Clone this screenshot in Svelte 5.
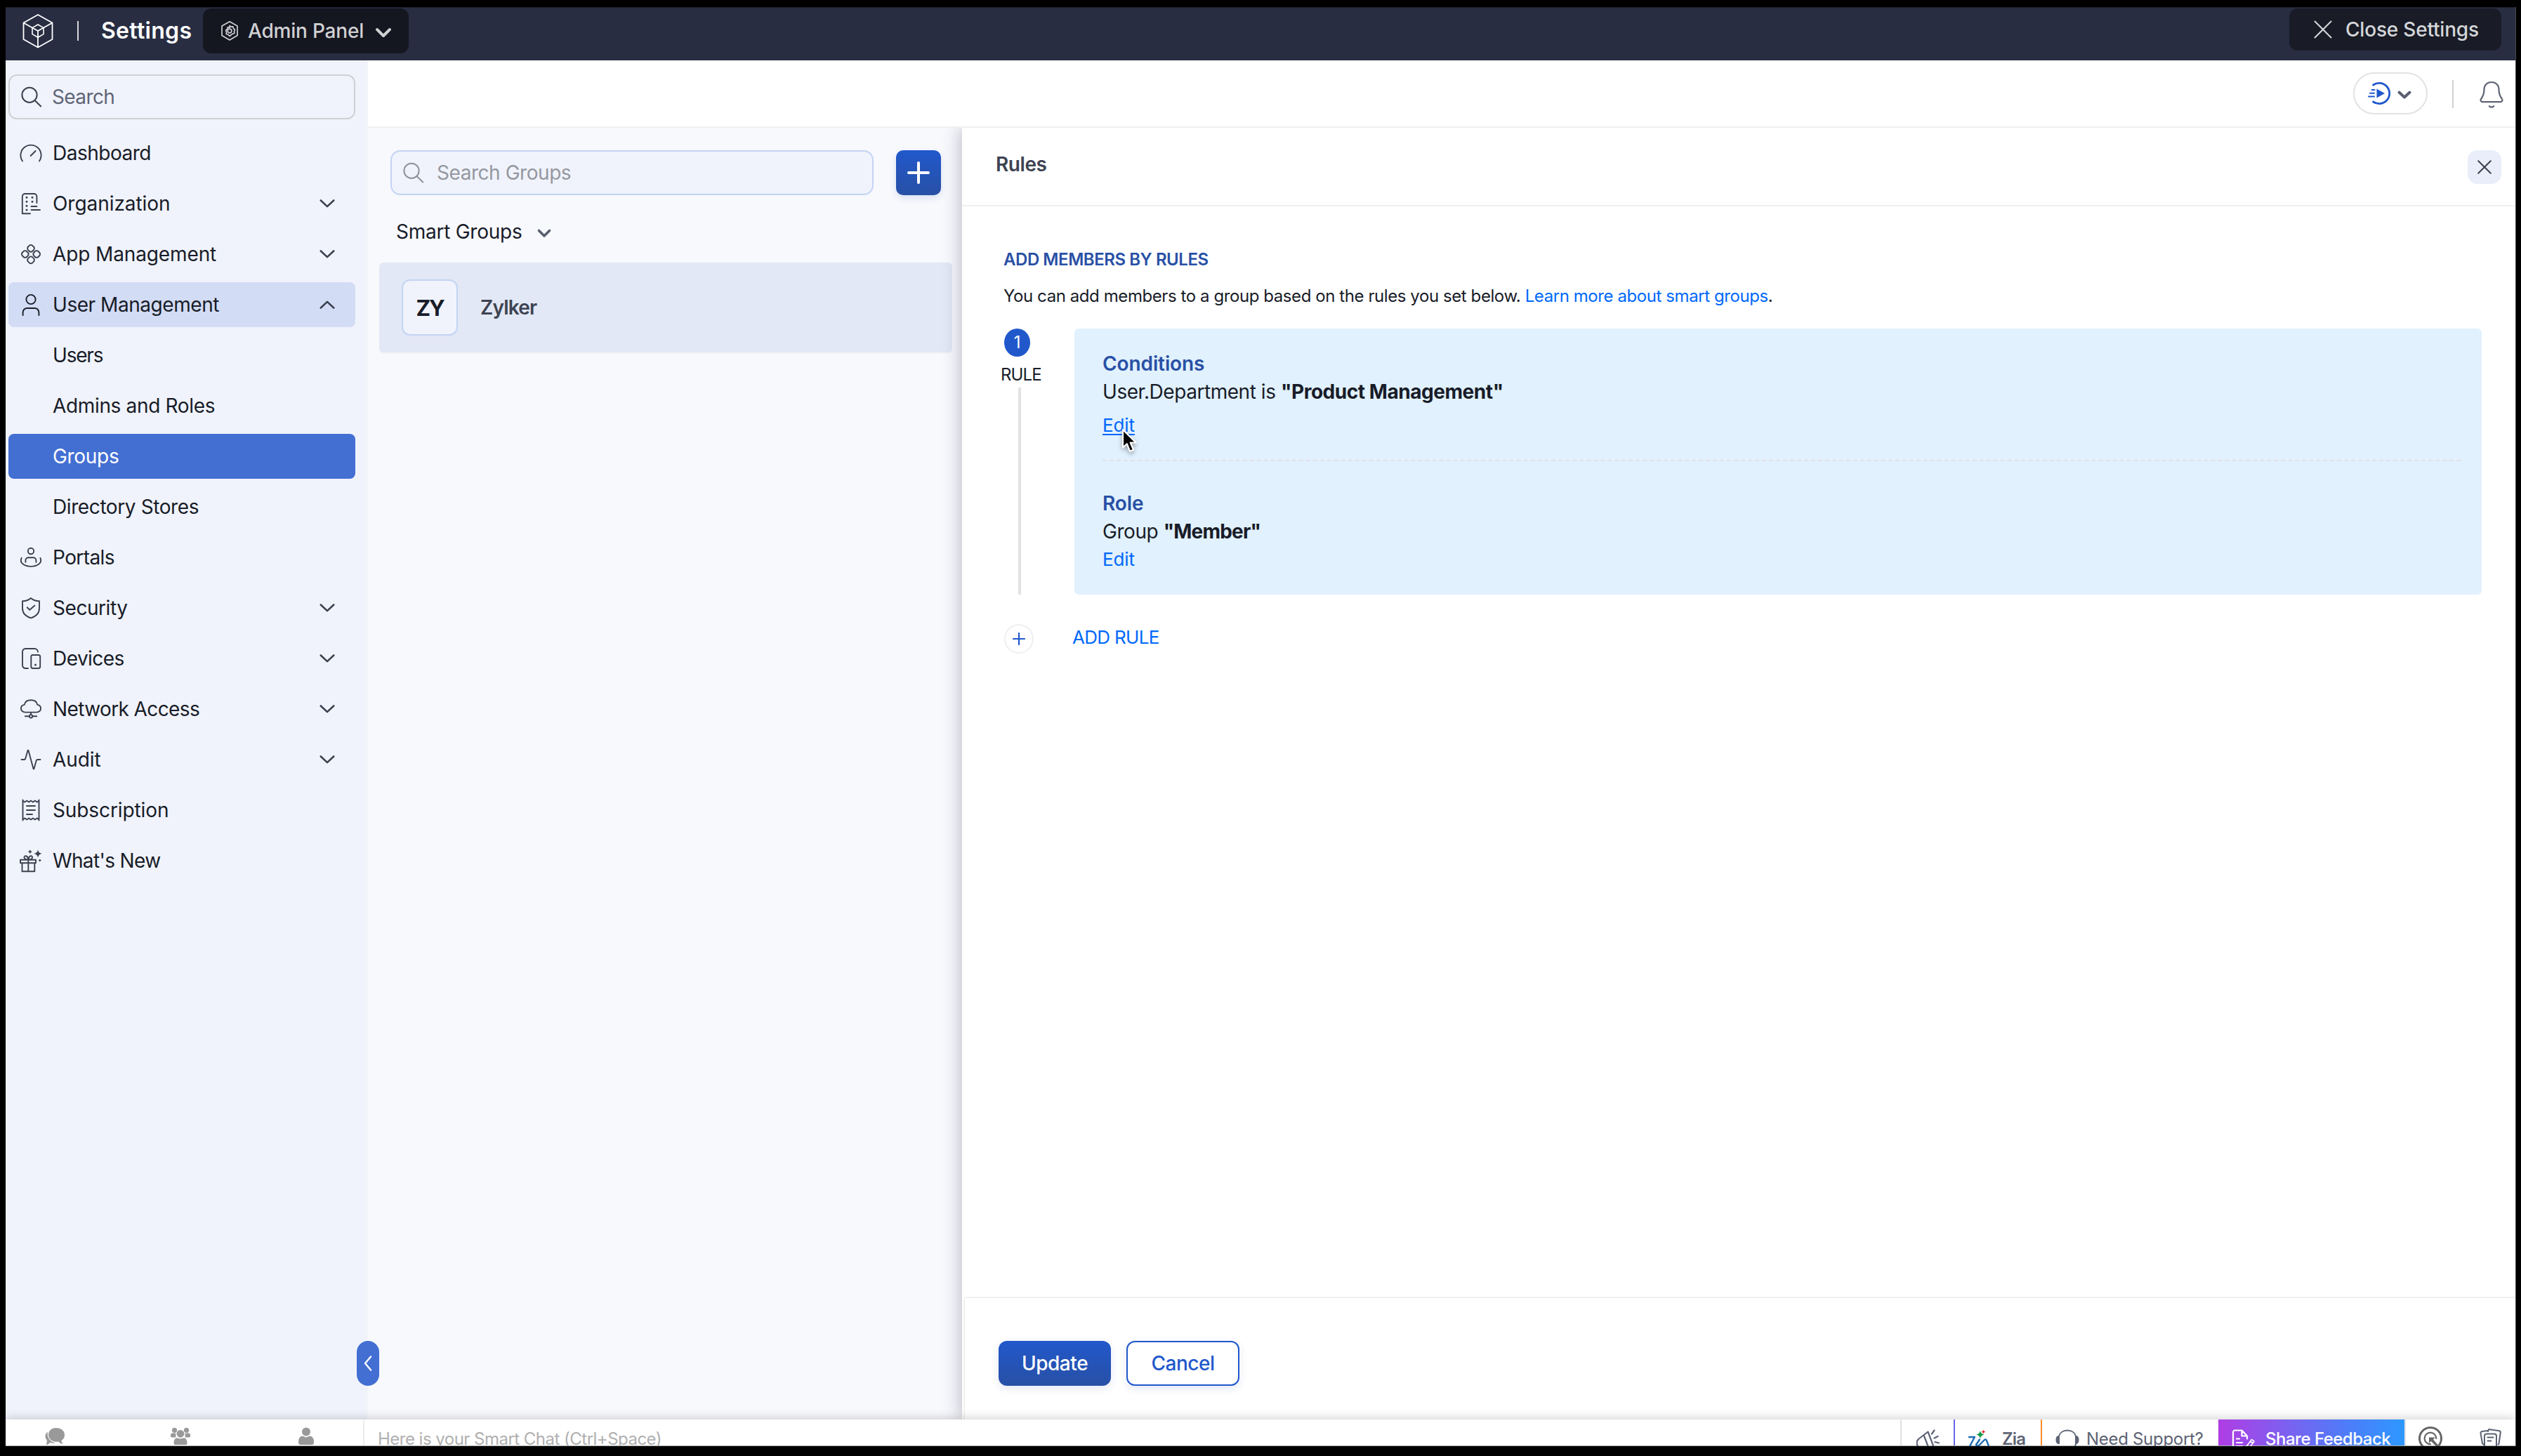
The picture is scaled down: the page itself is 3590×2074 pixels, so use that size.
<script>
  // tracking: per-label letter-spacing in px
  const nav = [
    { id: 'dashboard', label: 'Dashboard', tracking: -0.49 },
    { id: 'organization', label: 'Organization', expandable: true, tracking: -0.05 },
    { id: 'apps', label: 'App Management', expandable: true, tracking: -0.12 },
    { id: 'user', label: 'User Management', expandable: true, open: true, tracking: -0.45 },
    { label: 'Users', tracking: -1.2 },
    { label: 'Admins and Roles', tracking: -0.34 },
    { label: 'Groups', active: true, tracking: -0.3 },
    { label: 'Directory Stores', tracking: -0.4 },
    { id: 'portals', label: 'Portals', tracking: -0.6 },
    { id: 'security', label: 'Security', expandable: true, tracking: -0.45 },
    { id: 'devices', label: 'Devices', expandable: true, tracking: -0.55 },
    { id: 'network', label: 'Network Access', expandable: true, tracking: -0.6 },
    { id: 'audit', label: 'Audit', expandable: true, tracking: -0.1 },
    { id: 'subscription', label: 'Subscription', tracking: -0.1 },
    { id: 'new', label: "What's New", tracking: -0.65 }
  ];
</script>

{#snippet navIcon(id)}
  <svg class="nav-icon" viewBox="0 0 36 36">
    {#if id === 'dashboard'}
      <path d="M6 29.5A14.6 14.6 0 1 1 30 29.5M17.6 22L24.6 15" />
    {:else if id === 'organization'}
      <path d="M17 32.2H5.8V8a4 4 0 0 1 4-4h12.6a4 4 0 0 1 4 4v9M18.5 22h8M18.5 27H31" />
      <path class="dots" d="M12 9.3v.01M20 9.3v.01M12 15.3v.01M20 15.3v.01M12 21.3v.01M12 27v.01" />
    {:else if id === 'apps'}
      <g class="petals">
        <rect x="-4.4" y="-4.4" width="8.8" height="8.8" rx="3.2" transform="translate(18 9.8) rotate(45)" />
        <rect x="-4.4" y="-4.4" width="8.8" height="8.8" rx="3.2" transform="translate(18 26.4) rotate(45)" />
        <rect x="-4.4" y="-4.4" width="8.8" height="8.8" rx="3.2" transform="translate(9.8 18) rotate(45)" />
        <rect x="-4.4" y="-4.4" width="8.8" height="8.8" rx="3.2" transform="translate(26.2 18) rotate(45)" />
      </g>
    {:else if id === 'user'}
      <circle cx="18" cy="10.5" r="6.6" />
      <path d="M6.6 33v-4a6 6 0 0 1 6-6h10.8a6 6 0 0 1 6 6v4" />
    {:else if id === 'portals'}
      <circle cx="18" cy="9" r="4.2" />
      <path d="M10.4 24.7v-2.5a4 4 0 0 1 4-4h7a4 4 0 0 1 4 4v2.5M4.6 18.8C1 26 9.5 30.9 18 30.9S35 26 31.4 18.8" />
    {:else if id === 'security'}
      <path d="M18 4c-3.5 3-7.5 4.3-12 4.3v10.2C6 25 10.5 30 18 32.3 25.5 30 30 25 30 18.5V8.3C25.5 8.3 21.5 7 18 4z" />
      <path d="M12.7 17.3l3.6 3.4 7.1-6.2" />
    {:else if id === 'devices'}
      <path d="M14 32H10.2a4.2 4.2 0 0 1-4.2-4.2V8.2A4.2 4.2 0 0 1 10.2 4h13.2a4.5 4.5 0 0 1 4.5 4.5" />
      <rect x="18.3" y="13" width="12.9" height="19" rx="2.4" />
      <path class="dots" d="M24.5 27v.01" />
    {:else if id === 'network'}
      <path d="M10 22.600C6.500 22.600 3.900 20.200 3.900 17.200c0-2.800 2-4.800 4.800-5.300C9.500 7.800 13 5.200 18 5.200s8.500 2.600 9.300 6.700c2.800.5 4.800 2.500 4.800 5.300 0 3-2.600 5.400-6.100 5.400zM18 22.600V26M9.800 28.300h5.800M20.400 28.300h5.800" />
      <circle cx="18" cy="28.3" r="2.2" />
    {:else if id === 'audit'}
      <path d="M4.5 18H8.500c1 0 1.500-.6 1.700-1.500L13.700 4.600h.6L21.700 31.400h.6L25.700 19.500c.3-.9.800-1.500 1.800-1.500H31.500" />
    {:else if id === 'subscription'}
      <path d="M6.500 3.500v29M29.500 3.500v29M6.500 4.500l2.900 2 2.900-2 2.900 2 2.800-2 2.900 2 2.900-2 2.900 2 2.800-2M6.500 31.500l2.900-2 2.900 2 2.900-2 2.800 2 2.900-2 2.900 2 2.900-2 2.800 2M12 12h12M12 18h12M12 24h8" />
    {:else}
      <path d="M3 16.800h22v4.500H3zM5.500 21.300h17.800v12H5.500zM14.300 16.500v17M14.300 16.500c-5 0-6.300-1.800-5.700-4 .8-2.300 4.800-1.800 5.700 4 .9-5.800 4.900-6.300 5.700-4 .6 2.200-.7 4-5.700 4" />
      <path class="sparkle" d="M28 2.500q.9 4.600 5.500 5.500-4.600.9-5.500 5.500-.9-4.600-5.500-5.500 4.600-.9 5.500-5.500zM16.800 2.300q.5 2.500 3 3-2.500.5-3 3-.5-2.500-3-3 2.500-.5 3-3zM30.800 15.200q.4 2 2.400 2.400-2 .4-2.400 2.400-.4-2-2.400-2.400 2-.4 2.400-2.400z" />
    {/if}
  </svg>
{/snippet}

{#snippet magnifier()}
  <svg class="magnifier" viewBox="0 0 30 30">
    <circle cx="12" cy="12.3" r="10.6" />
    <path d="M19.5 20l8.700 8.500" />
  </svg>
{/snippet}

<div class="screen">
  <div class="window">
    <header class="header">
      <svg class="logo" viewBox="0 0 44 50">
        <path d="M22 2L42.500 13.500V37L22 48.500 1.500 37V13.500zM1.500 13.500L22 25 42.500 13.500M22 25V48.500" />
        <path class="inner" d="M22 16l8 4.600v9L22 34.200l-8-4.600v-9z" />
      </svg>
      <span class="header-rule"></span>
      <span class="title">Settings</span>
      <button class="panel-switch">
        <svg class="hex" viewBox="0 0 26 30">
          <path d="M13 1.800L24 8v13.500L13 28 2 21.500V8z" />
          <path d="M13 7.500l2 1.700 2.700-.3.800 2.600 2 1.800-1 2.400.3 2.700-2.600.8L13 22.500l-2.200-2.300-2.600-.8.300-2.700-1-2.400 2-1.800.8-2.600 2.700.3z" />
          <circle cx="13" cy="15" r="2.8" />
        </svg>
        <span>Admin Panel</span>
        <svg class="switch-caret" viewBox="0 0 24 16"><path d="M3 3l9 9 9-9" /></svg>
      </button>
      <button class="close-settings">
        <svg viewBox="0 0 26 26"><path d="M1.500 1.500l23 23M24.500 1.500l-23 23" /></svg>
        <span>Close Settings</span>
      </button>
    </header>

    <div class="body">
      <aside class="sidebar">
        <div class="side-search">
          {@render magnifier()}
          <span>Search</span>
        </div>
        <nav>
          {#each nav as item}
            <div class="row" class:open={item.open} class:active={item.active}>
              <span class="slot">
                {#if item.id}{@render navIcon(item.id)}{/if}
              </span>
              <span class="label" style:letter-spacing="{item.tracking}px">{item.label}</span>
              {#if item.expandable}
                <svg class="chev" viewBox="0 0 22 12"><path d="M1.800 1.500l9.200 8.600 9.200-8.600" /></svg>
              {/if}
            </div>
          {/each}
        </nav>
        <button class="collapse" aria-label="Collapse">
          <svg viewBox="0 0 12 22"><path d="M10 1.500L2 11l8 9.500" /></svg>
        </button>
      </aside>

      <main class="main">
        <div class="topbar">
          <div class="play">
            <svg class="play-icon" viewBox="0 0 34 34">
              <path class="ring" d="M7.500 5A14.700 14.700 0 1 1 7.500 29" />
              <path class="lines" d="M5.500 12h4M3 16.800h6M1 21.500h8" />
              <path class="tri" d="M12.500 10.500v13L24 17z" />
            </svg>
            <svg class="play-caret" viewBox="0 0 20 13"><path d="M2.500 2.500L10 9.500l7.500-7" /></svg>
          </div>
          <span class="top-rule"></span>
          <svg class="bell" viewBox="0 0 34 40">
            <path d="M17 2C10.500 2 6.500 6.500 6.500 12.500 6.500 20 4.500 22.500 2.300 25.500c-1.600 2.400-.4 4.700 2 4.700h25.400c2.400 0 3.600-2.300 2-4.700C29.500 22.500 27.500 20 27.500 12.500 27.500 6.500 23.500 2 17 2zM13.800 36.200q3.200 3 6.400 0" />
          </svg>
        </div>

        <div class="content">
          <section class="groups">
            <div class="group-tools">
              <div class="group-search">
                {@render magnifier()}
                <span>Search Groups</span>
              </div>
              <button class="add" aria-label="Add group">
                <svg viewBox="0 0 32 32"><path d="M16 2v28M2 16h28" /></svg>
              </button>
            </div>
            <div class="filter">
              <span>Smart Groups</span>
              <svg viewBox="0 0 20 13"><path d="M2.500 2.500L10 10l7.500-7.500" /></svg>
            </div>
            <div class="group">
              <span class="avatar">ZY</span>
              <span class="group-name">Zylker</span>
            </div>
          </section>

          <section class="rules">
            <div class="rules-head">
              <h2>Rules</h2>
              <button class="dismiss" aria-label="Close">
                <svg viewBox="0 0 20 20"><path d="M1.200 1.200l17.600 17.600M18.800 1.200L1.200 18.800" /></svg>
              </button>
            </div>
            <div class="rules-body">
              <h3>ADD MEMBERS BY RULES</h3>
              <p class="intro">You can add members to a group based on the rules you set below. <a href="#learn">Learn more about smart groups</a>.</p>
              <div class="rule">
                <div class="step">
                  <span class="num">1</span>
                  <span class="step-label">RULE</span>
                  <span class="step-line"></span>
                </div>
                <div class="card">
                  <div class="block first">
                    <h4>Conditions</h4>
                    <p>User.Department is <b>"Product Management"</b></p>
                    <div class="edit-line">
                      <a class="hovered" href="#conditions">Edit</a>
                      <svg class="cursor" viewBox="0 0 24 36">
                        <path d="M2 2v25.500l5.800-5.300 4.300 10.600 5-2.100-4.400-10.200h8z" />
                      </svg>
                    </div>
                  </div>
                  <div class="block">
                    <h4>Role</h4>
                    <p>Group <b class="member">"Member"</b></p>
                    <div class="edit-line"><a href="#role">Edit</a></div>
                  </div>
                </div>
              </div>
              <div class="add-rule">
                <span class="add-circle">
                  <svg viewBox="0 0 18 18"><path d="M9 1v16M1 9h16" /></svg>
                </span>
                <a href="#add">ADD RULE</a>
              </div>
            </div>
            <div class="actions">
              <button class="btn primary">Update</button>
              <button class="btn secondary">Cancel</button>
            </div>
          </section>
        </div>
      </main>
    </div>

    <footer class="chatbar">
      <div class="tabs">
        <svg viewBox="0 0 30 26">
          <path d="M17 1c7 0 12 4 12 9.800 0 3.800-1.700 6.500-4.500 8.200.2 2 1 3.300 2.500 4.500-3 .2-5.200-1-6.500-3-8.500 1.500-14.500-3.500-14.500-9.700C6 5 10.500 1 17 1z" />
          <path d="M5 6.500C1.500 9 .6 13 2.500 16.500c.9 1.700 1.700 3 1.200 4.900L2.800 25c2.700-.2 4.200-1.400 5.200-3 2.500.6 5 .6 7.500-.1C8 21 3.500 14 5 6.500z" />
        </svg>
        <svg viewBox="0 0 30 26">
          <circle cx="6.500" cy="4.300" r="3.600" /><circle cx="23.500" cy="4.300" r="3.600" />
          <path d="M1 13.500V11c0-2 2-3 4-2.600l3.500.4-.2 5.700H2.500zM29 13.500V11c0-2-2-3-4-2.600l-3.500.4.200 5.700h5.800z" />
          <circle cx="15" cy="9.300" r="5.400" />
          <path d="M5.500 22.500c0-4 1.500-7 4.500-7.300l5 1.300 5-1.300c3 .3 4.500 3.300 4.500 7.300 0 2-1 2.500-2 2.500H7.500c-1 0-2-.5-2-2.500z" />
        </svg>
        <svg viewBox="0 0 30 26">
          <circle cx="15" cy="6.500" r="6" />
          <path d="M4 21c0-5 2-8.300 6-8.500l5 2 5-2c4 .2 6 3.500 6 8.500 0 3-1.200 4-3 4H7c-1.800 0-3-1-3-4z" />
        </svg>
      </div>
      <div class="chat-input">Here is your Smart Chat (Ctrl+Space)</div>
      <div class="horn">
        <svg viewBox="0 0 34 34">
          <path d="M1.500 23q-2.500-5.500 2-9.500L16.500 3.500l8 21-16 2.500q-5 0-7-4zM11 9.500l6.500 17M22 6.500l3.500-5M25.500 12.500l5-2.500M26.500 18l5.500 1.500" />
        </svg>
      </div>
      <div class="zia">
        <svg viewBox="0 0 30 34">
          <path class="zig" d="M1 11h8L2 24M16 14.500l-5 7.500q1.500 2.500 4 1L22.500 15.500q2.500-2.500 3.500.5l3.500 9" />
          <path class="green" d="M17 2q1 4.500 5.500 5.500-4.500 1-5.500 5.500-1-4.500-5.500-5.500 4.500-1 5.500-5.500z" />
          <path class="red" d="M21.500.8q.5 2.200 2.700 2.700-2.200.5-2.700 2.700-.5-2.200-2.700-2.700 2.200-.5 2.700-2.700z" />
        </svg>
        <span>Zia</span>
      </div>
      <div class="support">
        <svg viewBox="0 0 34 34">
          <path class="fill" d="M6 9v12H4q-3.500-1-3.500-6T4 9zM28 9v12h2q3.500-1 3.500-6T30 9z" />
          <path d="M5 10C6 5 10.500 1.500 17 1.500S28 5 29 10M29 21q-1 4-4 6" />
        </svg>
        <span>Need Support?</span>
      </div>
      <div class="feedback">
        <svg viewBox="0 0 34 34">
          <path d="M2 28V4a2.500 2.500 0 0 1 2.500-2.500H14.500L22 9.500v4M14.500 1.500v8H22M7 13.500h4M7 19h8M7 24h8" />
          <path class="pencil" d="M20.500 25L28.500 14.500l3.500 2.700L24 28M26.500 17l3.500 2.700" />
        </svg>
        <span>Share Feedback</span>
      </div>
      <div class="tail">
        <svg class="quick" viewBox="0 0 36 36">
          <circle class="outer" cx="18" cy="18" r="15.500" />
          <path d="M18 26.200A8.300 8.300 0 1 1 26.200 18" />
          <path class="arrow" d="M16 16.500h8.500L22 19.500l8 9-2.500 2L19 22l-3 2.500z" />
        </svg>
        <svg class="notes" viewBox="0 0 32 32">
          <rect x="7" y="8.500" width="17" height="20" rx="3" />
          <path d="M5.500 23.500L4 22 1.500 7.500Q1.500 5.500 3.500 5l7.500-1M12 5l1-3 14.500 2Q30 4.500 29.800 6.500L27.500 22.500l-1 1M11.500 13.500h8M11.500 18.500h5" />
        </svg>
      </div>
    </footer>
  </div>
</div>

<style>
  :global(body) { background: #000; }
  * { box-sizing: border-box; }
  h2, h3, h4, p { margin: 0; }
  button { font: inherit; letter-spacing: inherit; border: 0; padding: 0; }
  svg { display: block; flex: none; fill: none; stroke-linecap: round; stroke-linejoin: round; }
  a { color: #0068fb; text-decoration: none; }

  .screen {
    width: 3590px;
    height: 2074px;
    padding: 10px 7px 14px 8px;
    background: #000;
    font-family: Inter, "Liberation Sans", sans-serif;
    font-size: 28px;
    letter-spacing: -0.45px;
    color: #181c28;
  }
  .window {
    position: relative;
    height: 2050px;
    display: flex;
    flex-direction: column;
    overflow: hidden;
    border-right: 1px solid #4a4a4a;
    background: #fff;
  }

  /* header */
  .header {
    flex: none;
    height: 76px;
    display: flex;
    align-items: flex-start;
    background: #282d42;
    border-top: 1px solid #1a1d2b;
    padding: 1px 20px 0 24px;
  }
  .logo { width: 44px; height: 50px; margin-top: 7px; stroke: #fff; stroke-width: 1.8; }
  .logo .inner { stroke-width: 1.6; }
  .header-rule { width: 2px; height: 28px; margin: 18px 0 0 34px; background: #d8d8dc; }
  .title {
    width: 145px;
    margin-left: 32px;
    font-size: 32px;
    font-weight: 600;
    letter-spacing: 0.3px;
    line-height: 63px;
    color: #fff;
  }
  .panel-switch, .close-settings {
    display: flex;
    align-items: center;
    border-radius: 12px;
    font-weight: 500;
    line-height: 62px;
    letter-spacing: -0.2px;
  }
  .panel-switch { width: 293px; height: 64px; padding: 0 24px 0 25px; background: #141620; color: #d0d0d2; }
  .hex { width: 26px; height: 34px; margin-right: 13px; stroke: #d0d0d2; stroke-width: 1.7; }
  .switch-caret { width: 24px; height: 16px; margin: 5px 0 0 auto; stroke: #d0d0d2; stroke-width: 4; }
  .close-settings { width: 302px; height: 60px; margin-left: auto; padding-left: 35px; background: #191c27; color: #d5d6d9; }
  .close-settings svg { width: 26px; height: 26px; margin-right: 19px; stroke: #d5d6d9; stroke-width: 2; }

  .body { flex: 1; min-height: 0; display: flex; }

  /* sidebar */
  .sidebar {
    position: relative;
    flex: none;
    width: 516px;
    padding: 20px 16px 0 4px;
    background: #f0f3fb;
    border-right: 2px solid #f3f5fb;
  }
  .side-search {
    display: flex;
    align-items: center;
    height: 64px;
    padding-left: 16px;
    border: 2px solid #cfd1d5;
    border-radius: 12px;
    color: #606577;
    letter-spacing: -0.6px;
  }
  .magnifier { width: 30px; height: 30px; stroke: #3c4150; stroke-width: 2; }
  .side-search span { margin-left: 14px; }
  nav { display: flex; flex-direction: column; gap: 8px; margin-top: 16px; }
  .row {
    display: flex;
    align-items: center;
    height: 64px;
    padding: 0 29px 0 14px;
    border-radius: 8px;
  }
  .row.open { background: #d3dcf5; }
  .row.active { background: #436fd3; color: #fff; }
  .slot { width: 36px; margin-right: 13px; }
  .nav-icon { width: 36px; height: 36px; stroke: #3c4150; stroke-width: 1.9; }
  .open .nav-icon { stroke: #181c28; }
  .nav-icon .dots { stroke-width: 3; }
  .nav-icon .sparkle { fill: #3c4150; stroke: none; }
  .chev { width: 22px; height: 12px; margin-left: auto; stroke: #3c4150; stroke-width: 2.6; }
  .open .chev { transform: rotate(180deg); }
  .collapse {
    position: absolute;
    z-index: 3;
    right: -18px;
    bottom: 48px;
    width: 32px;
    height: 64px;
    display: grid;
    place-items: center;
    border-radius: 16px;
    background: #436fd3;
  }
  .collapse svg { width: 12px; height: 22px; stroke: #fff; stroke-width: 2.4; }

  /* top bar */
  .main { flex: 1; min-width: 0; display: flex; flex-direction: column; }
  .topbar {
    flex: none;
    height: 96px;
    display: flex;
    align-items: flex-start;
    justify-content: flex-end;
    padding: 17px 17px 0 0;
    border-bottom: 2px solid #f0f0f1;
  }
  .play {
    width: 106px;
    height: 60px;
    display: flex;
    align-items: center;
    padding-left: 19px;
    border: 2px solid #e3e3e4;
    border-radius: 30px;
  }
  .play-icon { width: 34px; height: 34px; }
  .ring { stroke: #2058cb; stroke-width: 2.8; }
  .lines { stroke: #2058cb; stroke-width: 2; }
  .tri { fill: #2058cb; }
  .play-caret { width: 20px; height: 13px; margin: 5px 0 0 8px; stroke: #5a6070; stroke-width: 4; }
  .top-rule { width: 2px; height: 40px; margin: 11px 37px 0 35px; background: #d2d2d3; }
  .bell { width: 34px; height: 40px; margin-top: 12px; stroke: #5f6475; stroke-width: 2.2; }

  .content { flex: 1; min-height: 0; display: flex; }

  /* groups */
  .groups { flex: none; width: 846px; padding: 32px 14px 0 16px; background: #f8f9fd; }
  .group-tools { display: flex; justify-content: space-between; padding: 0 16px; }
  .group-search {
    width: 688px;
    height: 64px;
    display: flex;
    align-items: center;
    padding-left: 16px;
    border: 2px solid #c3d4f4;
    border-radius: 14px;
    background: #f0f3fb;
    color: #9598a1;
  }
  .group-search .magnifier { stroke: #8f929b; }
  .group-search span { margin-left: 18px; }
  .add {
    width: 64px;
    height: 64px;
    display: grid;
    place-items: center;
    border-radius: 10px;
    background: linear-gradient(#2158cb, #2850a5);
    box-shadow: 0 4px 10px rgba(40, 80, 165, 0.15);
  }
  .add svg { width: 32px; height: 32px; stroke: #fff; stroke-width: 4; }
  .filter { display: flex; align-items: center; height: 64px; margin: 20px 0 12px 24px; letter-spacing: -0.25px; }
  .filter svg { width: 20px; height: 13px; margin: 5px 0 0 22px; stroke: #5a6070; stroke-width: 3.6; }
  .group {
    height: 128px;
    display: flex;
    align-items: center;
    padding-left: 32px;
    border-radius: 6px;
    background: #e2e8f5;
    box-shadow: 0 2px 0 #f1f2f4;
  }
  .avatar {
    width: 80px;
    height: 80px;
    display: grid;
    place-items: center;
    border: 2px solid #c3d4f4;
    border-radius: 12px;
    background: #f0f3fb;
    font-size: 31px;
    font-weight: 700;
    letter-spacing: -2px;
  }
  .group-name { margin-left: 32px; font-weight: 600; letter-spacing: -0.8px; color: #3e4352; }

  /* rules */
  .rules {
    position: relative;
    flex: 1;
    min-width: 0;
    display: flex;
    flex-direction: column;
    background: #fff;
    box-shadow: -2px 0 24px rgba(40, 45, 66, 0.3);
    clip-path: inset(0 0 0 -40px);
  }
  .rules-head {
    flex: none;
    height: 112px;
    display: flex;
    justify-content: space-between;
    padding: 32px 20px 0 48px;
    border-bottom: 2px solid #f0f0f1;
  }
  h2 { font-size: 28px; font-weight: 600; line-height: 40px; color: #3e4352; }
  .dismiss { width: 48px; height: 48px; display: grid; place-items: center; border-radius: 14px; background: #e9eefa; }
  .dismiss svg { width: 20px; height: 20px; stroke: #3c4150; stroke-width: 2; }
  .rules-body { flex: 1; padding: 61px 48px 0 59px; }
  h3 { font-size: 24px; font-weight: 600; line-height: 30px; color: #2850a5; }
  .intro { margin-top: 22px; font-size: 24px; line-height: 30px; letter-spacing: -0.42px; }
  .rule { display: flex; margin: 31px 0 0 1px; height: 379px; }
  .step { width: 100px; display: flex; flex-direction: column; align-items: flex-start; }
  .num {
    width: 37px;
    height: 40px;
    border-radius: 50%;
    background: #2058cb;
    color: #fff;
    font-size: 24px;
    line-height: 39px;
    text-align: center;
  }
  .step-label { margin: 11px 0 0 -5px; font-size: 24px; line-height: 30px; letter-spacing: -0.9px; }
  .step-line { flex: 1; width: 4px; margin: 3px 0 0 20px; background: #e2e2e4; }
  .card { flex: 1; padding: 30px 30px 0 40px; border-radius: 6px; background: #e1f1fe; }
  h4 { font-size: 28px; font-weight: 600; line-height: 40px; letter-spacing: -0.1px; color: #2850a5; }
  .block p { line-height: 40px; }
  .block b { font-weight: 700; }
  .block .member { letter-spacing: -0.8px; }
  .edit-line { position: relative; height: 40px; font-size: 26px; line-height: 40px; letter-spacing: -0.1px; }
  .first { height: 159px; margin-bottom: 40px; border-bottom: 2px dashed #dfe2e6; }
  .first .edit-line { margin-top: 8px; }
  .hovered { text-decoration: underline; text-decoration-thickness: 2px; text-underline-offset: 3px; }
  .cursor {
    position: absolute;
    left: 27px;
    top: 24px;
    width: 24px;
    height: 36px;
    fill: #000;
    stroke: #fff;
    stroke-width: 2.2;
    filter: drop-shadow(0 3px 3px rgba(0, 0, 0, 0.35));
  }
  .add-rule { display: flex; align-items: flex-start; margin: 42px 0 0 1px; }
  .add-circle {
    width: 42px;
    height: 42px;
    display: grid;
    place-items: center;
    border: 2px solid #efeff0;
    border-radius: 50%;
  }
  .add-circle svg { width: 18px; height: 18px; stroke: #2058cb; stroke-width: 2.2; }
  .add-rule a { margin-left: 55px; font-size: 26px; line-height: 38px; letter-spacing: -0.7px; }
  .actions {
    flex: none;
    height: 173px;
    display: flex;
    gap: 22px;
    margin-left: 4px;
    padding: 61px 0 0 48px;
    box-shadow: 0 0 3px rgba(0, 0, 0, 0.2);
  }
  .btn {
    width: 160px;
    height: 64px;
    border-radius: 12px;
    font-weight: 500;
    text-align: center;
    box-shadow: 0 4px 12px rgba(40, 80, 165, 0.13);
  }
  .primary { background: linear-gradient(#2158cb, #2850a5); color: #fff; }
  .secondary { width: 161px; border: 2px solid #2058cb; background: #fff; color: #2058cb; }

  /* chat bar */
  .chatbar {
    position: relative;
    z-index: 2;
    flex: none;
    height: 38px;
    display: flex;
    background: #fff;
    border-bottom: 1px solid #a9adad;
    box-shadow: 0 -2px 14px rgba(0, 0, 0, 0.18);
    font-size: 24px;
    line-height: 56px;
    color: #5d6374;
    white-space: nowrap;
    clip-path: inset(-30px 0 0 0);
  }
  .tabs { width: 511px; display: flex; padding: 11px 0 0 55px; gap: 149px; border-right: 2px solid #ececec; }
  .tabs svg { width: 30px; height: 26px; fill: #999; }
  .chat-input { flex: 1; padding-left: 19px; letter-spacing: -0.52px; color: #b0b0b0; }
  .horn { width: 76px; padding: 14px 0 0 21px; border-left: 2px solid #e1e1e2; }
  .horn svg { width: 34px; height: 34px; stroke: #5d6374; stroke-width: 2.2; }
  .zia { width: 124px; display: flex; padding-left: 19px; border-left: 2px solid #6668ee; font-weight: 600; letter-spacing: -0.8px; }
  .zia svg { width: 30px; height: 34px; margin: 14px 18px 0 0; }
  .zig { stroke: #1c6bb5; stroke-width: 2.4; }
  .green { fill: #159a48; }
  .red { fill: #e5252c; }
  .support { width: 253px; display: flex; padding-left: 19px; border-left: 2px solid #ff8f2c; letter-spacing: -0.3px; }
  .support svg { width: 34px; height: 34px; margin: 14px 10px 0 0; stroke: #5d6374; stroke-width: 1.8; }
  .support .fill { fill: #5d6374; stroke: none; }
  .feedback {
    width: 265px;
    display: flex;
    padding-left: 19px;
    background: linear-gradient(90deg, #b03de4, #7a62f0 38%, #4f7bf8 68%, #2d98ff);
    color: #fff;
    font-weight: 500;
    letter-spacing: -0.5px;
  }
  .feedback svg { width: 34px; height: 34px; margin: 14px 14px 0 0; stroke: #fff; stroke-width: 2.2; }
  .feedback .pencil { stroke-width: 1.6; }
  .tail { width: 158px; display: flex; padding-left: 17px; border-left: 2px solid #e1e1e2; }
  .quick { width: 36px; height: 36px; margin: 9px 52px 0 0; stroke: #666; stroke-width: 2.2; }
  .quick .outer { stroke-width: 3; }
  .quick .arrow { fill: #666; stroke: none; }
  .notes { width: 32px; height: 32px; margin-top: 12px; stroke: #5d6374; stroke-width: 2; }
</style>
